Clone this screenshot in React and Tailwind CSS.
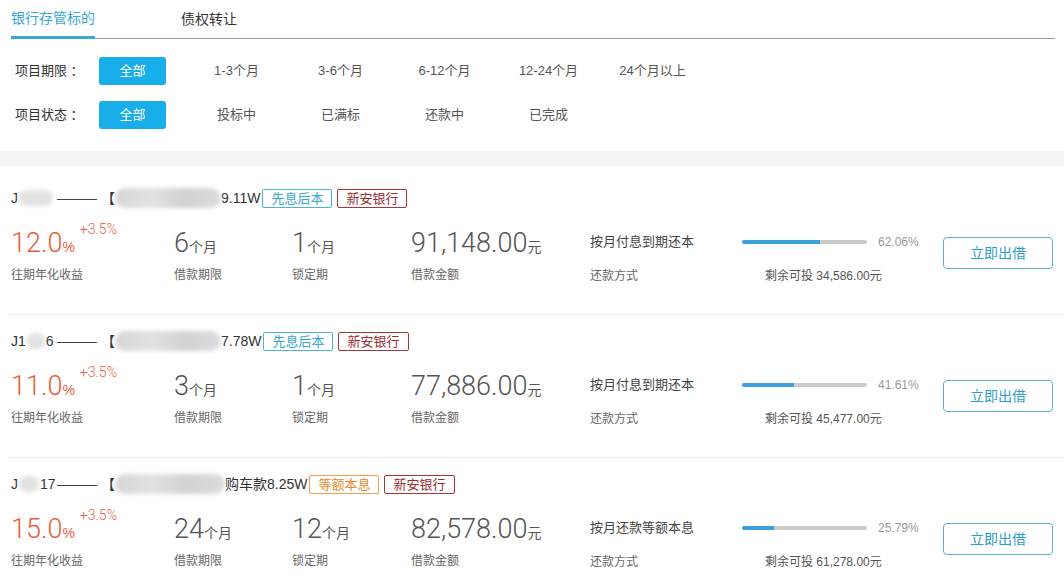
const font = "font-['Liberation_Sans','Noto_Sans_CJK_SC',sans-serif]";

const terms = ["全部", "1-3个月", "3-6个月", "6-12个月", "12-24个月", "24个月以上"];
const states = ["全部", "投标中", "已满标", "还款中", "已完成"];

const loans = [
  {
    id: ["J", 34, ""],
    blob: 106,
    tail: "9.11W",
    tag: "先息后本",
    tone: "teal",
    rate: "12.0",
    term: "6",
    lock: "1",
    amount: "91,148.00",
    method: "按月付息到期还本",
    progress: 62.06,
    left: "34,586.00",
  },
  {
    id: ["J1", 18, "6"],
    blob: 106,
    tail: "7.78W",
    tag: "先息后本",
    tone: "teal",
    rate: "11.0",
    term: "3",
    lock: "1",
    amount: "77,886.00",
    method: "按月付息到期还本",
    progress: 41.61,
    left: "45,477.00",
  },
  {
    id: ["J", 20, "17"],
    blob: 110,
    tail: "购车款8.25W",
    tag: "等额本息",
    tone: "orange",
    rate: "15.0",
    term: "24",
    lock: "12",
    amount: "82,578.00",
    method: "按月还款等额本息",
    progress: 25.79,
    left: "61,278.00",
  },
];

const toneClass = {
  teal: "border-[#4cb6cf] text-[#35a9c9]",
  orange: "border-[#f0a050] text-[#e8892a]",
  red: "border-[#a8353a] text-[#9b2c30]",
};

const Tag = ({ text, tone, className = "" }) => (
  <span
    className={`inline-flex items-center h-[19px] px-[8px] border rounded-[2px] text-[13px] leading-none ${toneClass[tone]} ${className}`}
  >
    {text}
  </span>
);

const FilterRow = ({ label, options, className = "" }) => (
  <div className={`flex items-center h-[28px] ${className}`}>
    <div className="w-[99px] pl-[15px] text-[13px] text-[#333]">{label}</div>
    <div className="flex gap-[37px]">
      {options.map((o, i) => (
        <div
          key={o}
          className={`w-[67px] h-[28px] flex items-center justify-center rounded-[3px] text-[13px] whitespace-nowrap ${
            i === 0 ? "bg-[#17aeea] text-white" : "text-[#555]"
          }`}
        >
          {o}
        </div>
      ))}
    </div>
  </div>
);

const Stat = ({ value, unit, label, width, red }) => (
  <div className={width}>
    <div className="flex items-baseline h-[30px]">
      <span
        className={`font-['Roboto',sans-serif] font-light text-[27px] leading-[30px] ${
          red ? "text-[#e8603c]" : "text-[#555]"
        }`}
      >
        {value}
      </span>
      <span
        className={`text-[14px] ${red ? "text-[#e8603c]" : "text-[#555]"}`}
      >
        {unit}
      </span>
      {red && (
        <span className="self-start -mt-[7px] ml-[5px] font-['Roboto',sans-serif] font-light text-[14px] leading-[16px] text-[#e8603c]">
          +3.5%
        </span>
      )}
    </div>
    <div className="mt-[7px] text-[12px] leading-[20px] text-[#666]">
      {label}
    </div>
  </div>
);

const LoanRow = ({ loan, first }) => (
  <div
    className={`${
      first ? "pt-[22px]" : "pt-[16px]"
    } pb-[28px] pl-[3px] border-b border-[#ececec]`}
  >
    {/* Title line */}
    <div className="flex items-center h-[20px] text-[14px] text-[#333] whitespace-nowrap">
      <span className="w-[46px] flex items-center">
        <span>{loan.id[0]}</span>
        <span
          className="inline-block mx-[1px] h-[16px] rounded-full bg-[#e2e2e2] blur-[2px]"
          style={{ width: loan.id[1] }}
        />
        <span>{loan.id[2]}</span>
      </span>
      <span className="font-['Liberation_Sans'] tracking-[-1px] text-[#444]">
        ———
      </span>
      <span className="ml-[5px]">【</span>
      <span
        className="inline-block h-[20px] rounded-[10px] blur-[2px] bg-[linear-gradient(90deg,#d6d6d6,#e2e2e2_35%,#d2d2d2_65%,#dcdcdc)]"
        style={{ width: loan.blob }}
      />
      <span>{loan.tail}</span>
      <Tag text={loan.tag} tone={loan.tone} className="ml-[2px]" />
      <Tag text="新安银行" tone="red" className="ml-[5px]" />
    </div>

    {/* Figures */}
    <div className="mt-[20px] flex">
      <Stat width="w-[163px]" value={loan.rate} unit="%" label="往期年化收益" red />
      <Stat width="w-[118px]" value={loan.term} unit="个月" label="借款期限" />
      <Stat width="w-[119px]" value={loan.lock} unit="个月" label="锁定期" />
      <Stat width="w-[179px]" value={loan.amount} unit="元" label="借款金额" />

      <div className="w-[152px] pt-[4px]">
        <div className="text-[13px] leading-[20px] text-[#444]">{loan.method}</div>
        <div className="mt-[14px] text-[12px] leading-[20px] text-[#666]">还款方式</div>
      </div>

      <div className="w-[177px] pt-[4px]">
        <div className="flex items-center h-[20px]">
          <div className="w-[125px] h-[4px] rounded-full bg-[#cbcbcb] overflow-hidden">
            <div
              className="h-full bg-[#3ba1dd]"
              style={{ width: `${loan.progress}%` }}
            />
          </div>
          <span className="ml-[11px] text-[12px] text-[#999]">
            {loan.progress.toFixed(2)}%
          </span>
        </div>
        <div className="mt-[14px] pl-[23px] text-[12px] leading-[20px] text-[#555] whitespace-nowrap">
          剩余可投 {loan.left}元
        </div>
      </div>

      <button className="ml-[24px] mt-[9px] w-[110px] h-[32px] border border-[#5bb3c9] rounded-[4px] bg-white text-[14px] text-[#2c9ec6]">
        立即出借
      </button>
    </div>
  </div>
);

export default function App() {
  return (
    <div className={`w-[1064px] h-[588px] overflow-hidden bg-white ${font}`}>
      {/* Tabs */}
      <div className="ml-[11px] mr-[9px] flex h-[39px] border-b border-[#9a9a9a]">
        <div className="-mb-px flex items-center border-b-[3px] border-[#3aa9cf] text-[14px] text-[#35a8d6]">
          银行存管标的
        </div>
        <div className="ml-[86px] flex items-center text-[14px] text-[#333]">
          债权转让
        </div>
      </div>

      {/* Filters */}
      <div className="pt-[18px] pb-[22px]">
        <FilterRow label="项目期限 ：" options={terms} />
        <FilterRow label="项目状态 ：" options={states} className="mt-[16px]" />
      </div>

      <div className="h-[15px] bg-[#f5f5f7]" />

      {/* Loan list */}
      <div className="ml-[8px]">
        {loans.map((loan, i) => (
          <LoanRow key={i} loan={loan} first={i === 0} />
        ))}
      </div>
    </div>
  );
}
